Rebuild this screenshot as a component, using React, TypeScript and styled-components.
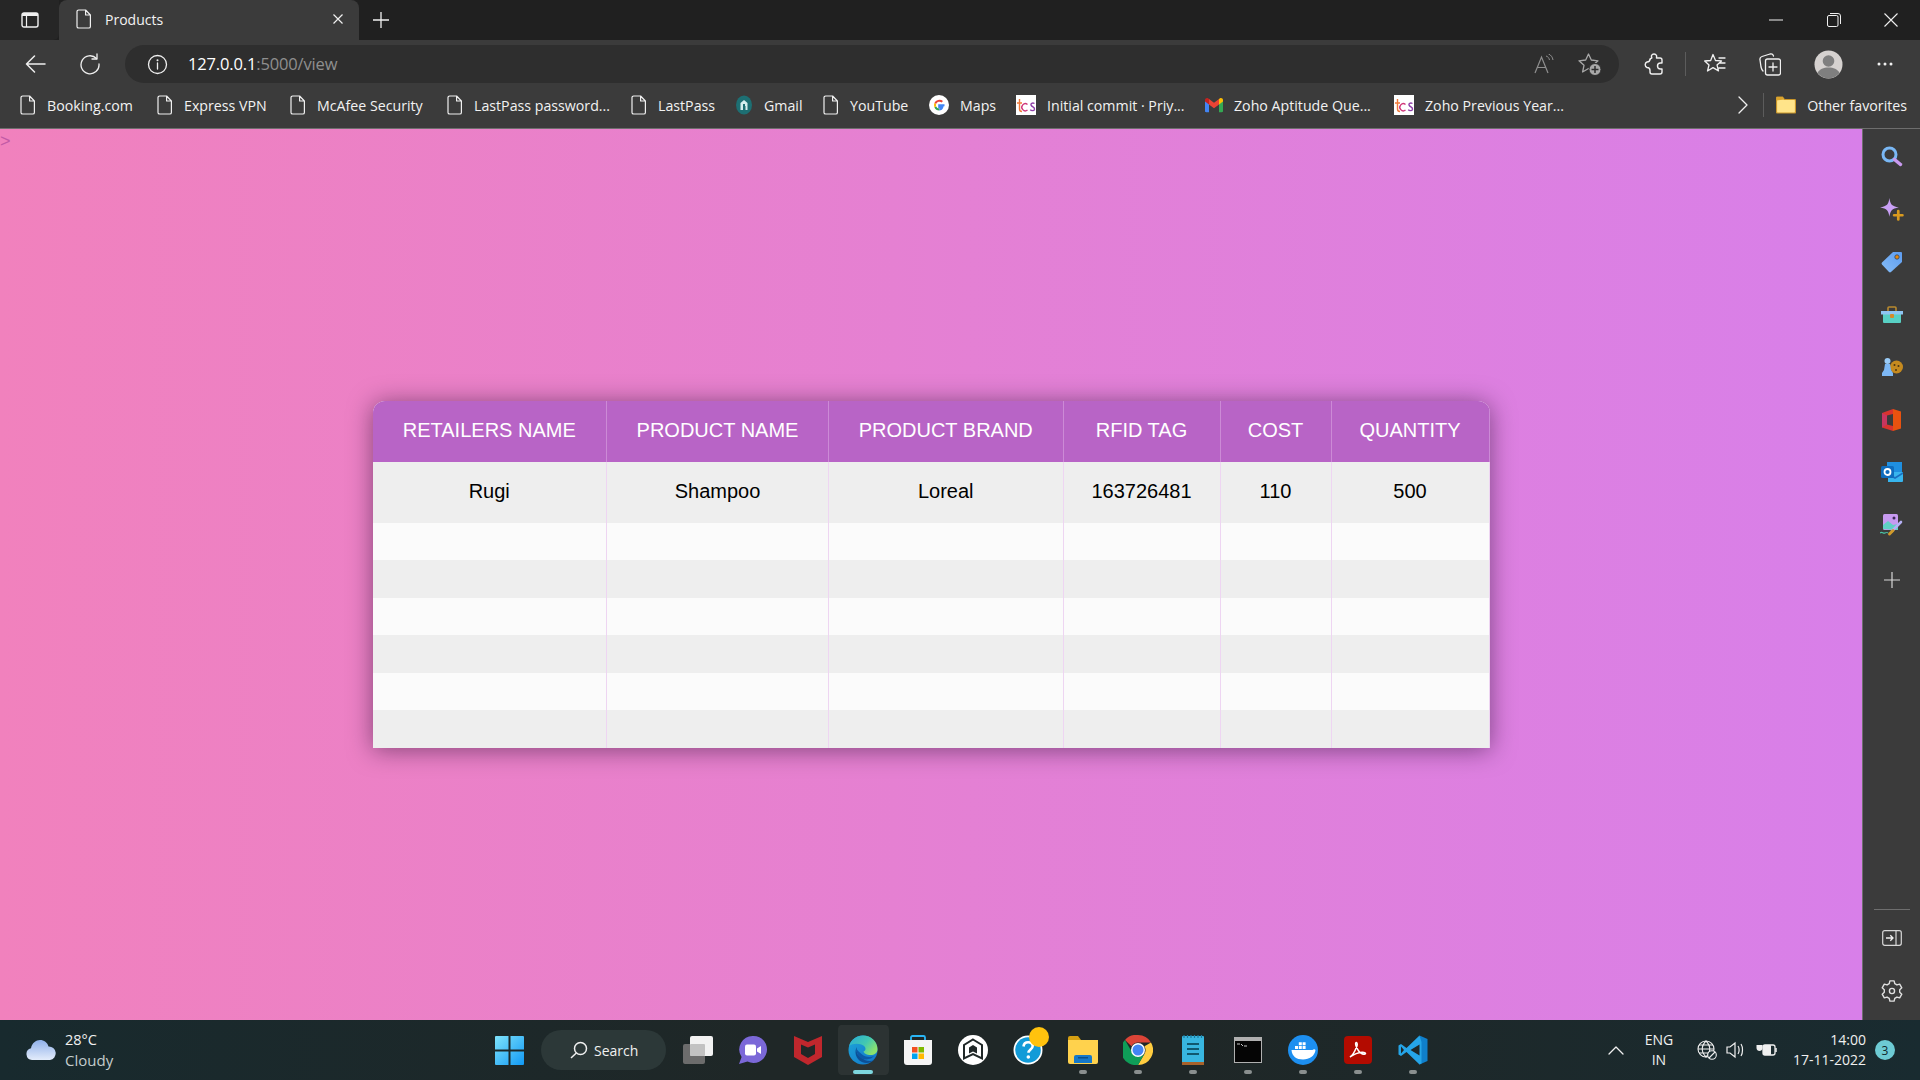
import React from "react";
import styled, { createGlobalStyle } from "styled-components";

const Global = createGlobalStyle`
  html, body { margin: 0; padding: 0; height: 100%; overflow: hidden; }
  body { font-family: "Open Sans", "Noto Sans", sans-serif; }
  #root { height: 100%; }
`;

const Screen = styled.div`
  width: 1920px;
  height: 1080px;
  display: flex;
  flex-direction: column;
  overflow: hidden;
`;

/* ---------- title bar ---------- */
const TitleBar = styled.div`
  height: 40px;
  flex: none;
  display: flex;
  align-items: stretch;
  background: #202020;
`;
const TabToggle = styled.div`
  width: 59px;
  display: flex;
  align-items: center;
  justify-content: center;
  background: #262626;
  border-bottom-right-radius: 6px;
`;
const Tab = styled.div`
  width: 300px;
  display: flex;
  align-items: center;
  padding: 0 15px 2px 17px;
  box-sizing: border-box;
  gap: 13px;
  background: #3b3b3b;
  border-radius: 8px 8px 0 0;
  color: #f2f2f2;
  font-size: 14px;
`;
const TabLabel = styled.span`
  flex: 1;
`;
const NewTab = styled.div`
  width: 44px;
  display: flex;
  align-items: center;
  justify-content: center;
`;
const Spacer = styled.div`
  flex: 1;
`;
const WindowBtn = styled.div`
  width: 57.5px;
  display: flex;
  align-items: center;
  justify-content: center;
`;

/* ---------- toolbar ---------- */
const ToolBar = styled.div`
  height: 48px;
  flex: none;
  box-sizing: border-box;
  padding: 5px 0 5px 7.5px;
  display: flex;
  align-items: stretch;
  background: #3b3b3b;
`;
const ToolBtn = styled.div<{ $w: number }>`
  width: ${(p) => p.$w}px;
  flex: none;
  display: flex;
  align-items: center;
  justify-content: center;
`;
const Address = styled.div`
  width: 1494px;
  flex: none;
  margin: 0 4px 0 7.5px;
  box-sizing: border-box;
  padding: 0 7px 0 22px;
  display: flex;
  align-items: center;
  background: #2e2e2e;
  border-radius: 19px;
`;
const Url = styled.div`
  margin-left: 20px;
  flex: 1;
  font-size: 16.5px;
  letter-spacing: -0.15px;
  color: #ffffff;
  padding-bottom: 1px;
`;
const UrlRest = styled.span`
  color: #8f8f8f;
`;
const ToolDivider = styled.div`
  width: 1px;
  height: 24px;
  align-self: center;
  background: #5c5c5c;
  flex: none;
`;

/* ---------- bookmarks ---------- */
const BookmarkBar = styled.div`
  height: 41px;
  flex: none;
  box-sizing: border-box;
  padding: 0 13px 6px 20px;
  display: flex;
  align-items: center;
  background: #3b3b3b;
  border-bottom: 1px solid #6e6e6e;
  color: #f2f2f2;
  font-size: 14.2px;
`;
const Bookmark = styled.div<{ $w?: number }>`
  width: ${(p) => (p.$w ? `${p.$w}px` : "auto")};
  flex: none;
  display: flex;
  align-items: center;
  gap: 11px;
  white-space: nowrap;
`;
const BookmarkIcon = styled.span`
  flex: none;
  display: flex;
  justify-content: center;
`;
const MoreChevron = styled.div`
  display: flex;
  margin-right: 15px;
`;
const BarDivider = styled.div`
  width: 1px;
  height: 24px;
  background: #5c5c5c;
  margin-right: 12px;
`;

/* ---------- content ---------- */
const Middle = styled.div`
  flex: 1;
  min-height: 0;
  display: flex;
`;
const Page = styled.main`
  flex: 1;
  position: relative;
  display: flex;
  align-items: center;
  justify-content: center;
  background: linear-gradient(to right, #f181bd, #d87fe9);
`;
const StrayMark = styled.span`
  position: absolute;
  left: 0;
  top: 2px;
  font: 18px "Liberation Sans", Arial, sans-serif;
  color: #c25aa6;
`;
const TableCard = styled.div`
  border-radius: 12px 12px 0 0;
  overflow: hidden;
  box-shadow: 0 2px 24px rgba(30, 10, 40, 0.5);
  background: #fff;
`;
const Table = styled.table`
  table-layout: fixed;
  width: 1117px;
  border-collapse: separate;
  border-spacing: 0;
  font: 20px "Liberation Sans", Arial, sans-serif;
  text-align: center;
`;
const HeadCell = styled.th<{ $w: number }>`
  width: ${(p) => p.$w}px;
  box-sizing: border-box;
  padding: 18px 0 20px;
  font-weight: 400;
  color: #ffffff;
  background: #b864c6;
  border-right: 1px solid #cc8ad6;
  white-space: nowrap;
`;
const Row = styled.tr<{ $odd: boolean }>`
  background: ${(p) => (p.$odd ? "#eeeeee" : "#fbfbfb")};
`;
const Cell = styled.td`
  padding: 18px 0 19.5px;
  height: 0;
  color: #000000;
  border-right: 1px solid #eed5f2;
  white-space: nowrap;
`;

/* ---------- sidebar ---------- */
const Sidebar = styled.aside`
  width: 58px;
  flex: none;
  box-sizing: border-box;
  padding: 2px 0 3px;
  display: flex;
  flex-direction: column;
  background: #3b3b3b;
  border-left: 1px solid #6e6e6e;
`;
const SideBtn = styled.div<{ $nudge?: number }>`
  height: 52.5px;
  flex: none;
  margin-top: ${(p) => p.$nudge || 0}px;
  display: flex;
  align-items: center;
  justify-content: center;
`;
const SideRule = styled.div`
  height: 1px;
  margin: auto 10px 2px 11px;
  background: #6e6e6e;
`;

/* ---------- taskbar ---------- */
const Taskbar = styled.footer`
  height: 60px;
  flex: none;
  display: flex;
  align-items: center;
  background: linear-gradient(to right, #182a2e, #1f2727 40%, #1f2727 62%, #192b30);
  color: #f0f0f0;
  font-size: 14px;
`;
const Weather = styled.div`
  width: 495px;
  flex: none;
  box-sizing: border-box;
  padding-left: 26px;
  display: flex;
  align-items: center;
  gap: 9px;
  font-size: 14.5px;
`;
const TwoLines = styled.div<{ $align?: string }>`
  display: flex;
  flex-direction: column;
  gap: 2px;
  line-height: 18px;
  text-align: ${(p) => p.$align || "left"};
`;
const Muted = styled.span`
  color: #c4cccc;
  font-size: 15px;
`;
const StartBtn = styled.div`
  width: 46px;
  flex: none;
  display: flex;
`;
const SearchPill = styled.div`
  width: 125px;
  height: 40px;
  flex: none;
  box-sizing: border-box;
  padding-left: 29px;
  display: flex;
  align-items: center;
  gap: 6px;
  border-radius: 20px;
  background: #2c3838;
  margin-right: 4.5px;
`;
const TaskBtn = styled.div<{ $active?: boolean }>`
  position: relative;
  width: 55px;
  height: 50px;
  flex: none;
  display: flex;
  align-items: center;
  justify-content: center;
  box-sizing: border-box;
  border-radius: 5px;
  background: ${(p) => (p.$active ? "#2c3333" : "transparent")};
  background-clip: padding-box;
  border-left: ${(p) => (p.$active ? "2.5px solid transparent" : "0")};
  border-right: ${(p) => (p.$active ? "2.5px solid transparent" : "0")};
`;
const RunDot = styled.span<{ $active?: boolean }>`
  position: absolute;
  bottom: 1px;
  left: 50%;
  transform: translateX(-50%);
  width: ${(p) => (p.$active ? "20px" : "8px")};
  height: 4px;
  border-radius: 2px;
  background: ${(p) => (p.$active ? "#7dd6de" : "#8a8f8f")};
`;
const HelpBadge = styled.span`
  position: absolute;
  top: 2px;
  right: 7px;
  width: 20px;
  height: 20px;
  border-radius: 50%;
  background: #ffc20e;
`;
const Tray = styled.div`
  flex: 1;
  display: flex;
  align-items: center;
  justify-content: flex-end;
  padding-right: 25px;
`;
const TrayIcon = styled.span<{ $w: number }>`
  width: ${(p) => p.$w}px;
  flex: none;
  display: flex;
  justify-content: center;
`;
const Lang = styled.div`
  width: 50px;
  flex: none;
  margin: 0 8px 0 6px;
`;
const Clock = styled.div`
  margin: 0 9px;
  flex: none;
`;
const Notif = styled.span`
  width: 20px;
  height: 20px;
  flex: none;
  border-radius: 50%;
  background: #6dcbd4;
  color: #10282c;
  font-size: 12px;
  display: flex;
  align-items: center;
  justify-content: center;
`;

/* ---------- drawings ---------- */
const Line = { fill: "none", stroke: "#f0f0f0", strokeWidth: 1.3, strokeLinecap: "round", strokeLinejoin: "round" } as const;

const FileIcon = ({ h = 20 }: { h?: number }) => (
  <svg width={h * 0.8} height={h} viewBox="0 0 16 20">
    <path {...Line} strokeWidth={1.2} d="M2.6 1h7l4.8 5v11.4a1.6 1.6 0 0 1-1.6 1.6H2.6A1.6 1.6 0 0 1 1 17.4V2.6A1.6 1.6 0 0 1 2.6 1zM9.6 1v5h4.800" />
  </svg>
);
const TcsIcon = () => (
  <svg width="20" height="20" viewBox="0 0 20 20">
    <rect width="20" height="20" fill="#fff" />
    <path d="M3.5 4v10c0 2 1 2.5 2.5 2.5M1 8h5" fill="none" stroke="#f0793a" strokeWidth="1.4" />
    <path d="M11.5 9.500a3.500 3.500 0 1 0 0 5.500" fill="none" stroke="#d0387a" strokeWidth="1.4" />
    <path d="M18.500 8.500c-2-1.200-4.300 0-3.300 1.800s4 2 3.300 4.200c-.6 1.700-3.500 1.300-4.200.200" fill="none" stroke="#8e3fa8" strokeWidth="1.4" />
  </svg>
);
const GoogleIcon = () => (
  <svg width="20" height="20" viewBox="0 0 20 20">
    <circle cx="10" cy="10" r="10" fill="#fff" />
    <path d="M15.500 10.200h-5.300v2h3.100c-.4 1.400-1.600 2.200-3.100 2.200" fill="none" stroke="#4285f4" strokeWidth="2" />
    <path d="M10.200 14.400c-1.700 0-3.200-1-3.900-2.600" fill="none" stroke="#34a853" strokeWidth="2" />
    <path d="M6.300 11.800c-.4-1-.4-2.400 0-3.500" fill="none" stroke="#fbbc05" strokeWidth="2" />
    <path d="M6.300 8.300c1-2.500 4.800-3.500 7-1.500" fill="none" stroke="#ea4335" strokeWidth="2" />
  </svg>
);
const GmailIcon = () => (
  <svg width="18" height="16" viewBox="0 0 18 16">
    <path d="M0 3v11c0 .8.500 1.200 1.200 1.200H4V6.500z" fill="#4285f4" />
    <path d="M18 3v11c0 .8-.5 1.200-1.200 1.200H14V6.500z" fill="#34a853" />
    <path d="M4 7.500V2l5 3.800L14 2v5.500L9 11.300z" fill="#ea4335" />
    <path d="M0 3c0-2 2-2.500 3-1.800L4 2v5.500L0 4.500z" fill="#c5221f" />
    <path d="M18 3c0-2-2-2.500-3-1.800L14 2v5.500l4-3z" fill="#fbbc04" />
  </svg>
);
const GmailSite = () => (
  <svg width="18" height="20" viewBox="0 0 18 20">
    <ellipse cx="9" cy="10" rx="8" ry="9.500" fill="#1d6f73" />
    <path d="M5.500 15V8l3.500-3 3.500 3v7h-2v-4H8v4z" fill="#d5eeee" />
    <path d="M8 15V9h2v6z" fill="#1d6f73" />
  </svg>
);
const FolderIcon = () => (
  <svg width="20" height="18" viewBox="0 0 20 18">
    <path d="M1.500 1h5l2 2.500h10a1 1 0 0 1 1 1V16a1 1 0 0 1-1 1h-17a1 1 0 0 1-1-1V2a1 1 0 0 1 1-1z" fill="#ffe48a" stroke="#c9962a" strokeWidth="1.200" />
    <path d="M.5 4.500V2a1 1 0 0 1 1-1h5l2 2.500z" fill="#dba42d" />
  </svg>
);

const SideSearch = () => (
  <svg width="22" height="22" viewBox="0 0 22 22">
    <circle cx="8.500" cy="8.500" r="6.500" fill="none" stroke="#7ab8f5" strokeWidth="3" />
    <path d="M13.500 13.500l6 5" stroke="#c99af0" strokeWidth="3.500" strokeLinecap="round" />
  </svg>
);
const SideSparkle = () => (
  <svg width="25" height="25" viewBox="0 0 24 24">
    <path d="M10 1c.9 6 2.200 8 9 9-6.800 1.200-8.100 3-9 9-.9-6-2.200-7.800-9-9 6.800-1 8.100-3 9-9z" fill="#c9a0f5" />
    <path d="M18.500 13.500v8M14.500 17.500h8" stroke="#d99a1f" strokeWidth="2.600" strokeLinecap="round" />
  </svg>
);
const SideTag = () => (
  <svg width="22" height="22" viewBox="0 0 22 22">
    <defs>
      <linearGradient id="tagG" x1="0" y1="1" x2="1" y2="0">
        <stop offset="0" stopColor="#86bdf7" />
        <stop offset="1" stopColor="#5d9cf0" />
      </linearGradient>
    </defs>
    <path d="M12 1h8a1 1 0 0 1 1 1v9L10 21a1.500 1.500 0 0 1-2 0L1 13.500a1.500 1.500 0 0 1 0-2z" fill="url(#tagG)" />
    <circle cx="16" cy="6" r="2.200" fill="#e8860c" stroke="#26456b" strokeWidth=".8" />
  </svg>
);
const SideTools = () => (
  <svg width="22" height="18" viewBox="0 0 22 18">
    <path d="M7 5V2a1 1 0 0 1 1-1h6a1 1 0 0 1 1 1v3" fill="none" stroke="#b98a2f" strokeWidth="1.600" />
    <rect x="2" y="7" width="18" height="10" rx="1" fill="#58d0c4" />
    <path d="M0 5h22v3.500H0z" fill="#8fc5f2" />
    <rect x="9" y="8" width="4" height="4" rx="1" fill="#d88a2a" />
  </svg>
);
const SideGames = () => (
  <svg width="24" height="22" viewBox="0 0 24 22">
    <circle cx="16.500" cy="11" r="6.500" fill="#c58a1f" />
    <circle cx="14.500" cy="9" r="1" fill="#4a3412" />
    <circle cx="18.500" cy="10" r="1" fill="#4a3412" />
    <circle cx="16" cy="14" r="1" fill="#4a3412" />
    <circle cx="7.500" cy="5" r="3" fill="#9accf8" />
    <path d="M5 8h5l1 6 2 3v3H2v-3l2-3z" fill="#7db8f5" />
  </svg>
);
const SideOffice = () => (
  <svg width="22" height="26" viewBox="0 0 22 24">
    <path d="M1 5l11-4v22L1 19.500z" fill="#d8332f" />
    <path d="M12 1l8 2.500v17L12 23z" fill="#e8520f" />
    <path d="M6 7.500l6-1.500v12l-6-1.500z" fill="#3b3b3b" />
    <path d="M1 5l5 2.500v9L1 19.500z" fill="#c8355f" />
  </svg>
);
const SideOutlook = () => (
  <svg width="22" height="22" viewBox="0 0 22 22">
    <rect x="6" y="1" width="15" height="12" fill="#1f8fe0" />
    <path d="M7 11h15v9a1 1 0 0 1-1 1H7z" fill="#37b5ee" />
    <path d="M7 12l7 4 8-5v2l-8 5-7-4z" fill="#1a6fc0" />
    <rect x="0" y="5" width="13" height="12" rx="1.500" fill="#0f6cbd" />
    <circle cx="6.500" cy="11" r="3" fill="none" stroke="#fff" strokeWidth="1.800" />
  </svg>
);
const SideDesigner = () => (
  <svg width="24" height="24" viewBox="0 0 24 24">
    <rect x="3" y="1" width="15" height="16" rx="1.500" fill="#c79af0" />
    <path d="M3 16V12l5-4 5 4 5-1v6z" fill="#5fd0c4" />
    <circle cx="14" cy="5" r="1.500" fill="#3b2a55" />
    <path d="M12 18l9-9" stroke="#b6b0f5" strokeWidth="2.600" strokeLinecap="round" />
    <path d="M9.500 21l3.500-3.500" stroke="#d09a2a" strokeWidth="3" strokeLinecap="round" />
    <path d="M0 20c2-2 3 1 5 0s2-1 3 0" fill="none" stroke="#49c7a8" strokeWidth="1.200" />
  </svg>
);
const SidePanel = () => (
  <svg width="20" height="16" viewBox="0 0 20 16">
    <rect x=".7" y=".7" width="18.600" height="14.600" rx="2" fill="none" stroke="#d8d8d8" strokeWidth="1.200" />
    <path d="M14 1v14" stroke="#d8d8d8" strokeWidth="1.200" />
    <path d="M4 8h7M8.300 5.300L11 8l-2.700 2.700" fill="none" stroke="#f0f0f0" strokeWidth="1.300" />
  </svg>
);
const SideGear = () => (
  <svg width="22" height="22" viewBox="0 0 24 24" fill="none" stroke="#e0e0e0" strokeWidth="1.500" strokeLinejoin="round">
    <path d="M9.700 2h4.600l.7 3 2.400 1.400 3-.9 2.300 4-2.300 2.100v2.800l2.300 2.100-2.300 4-3-.9L15 21l-.7 3H9.700L9 21l-2.400-1.400-3 .9-2.300-4 2.300-2.100v-2.800L1.300 9.500l2.300-4 3 .9L9 5z" transform="translate(0 -1)" />
    <circle cx="12" cy="12" r="2.800" />
  </svg>
);

const TaskView = () => (
  <svg width="30" height="28" viewBox="0 0 30 28">
    <rect x="0" y="8" width="22" height="20" rx="2" fill="#6c6c6c" />
    <rect x="7" y="0" width="23" height="20" rx="2" fill="#f2f2f2" />
    <rect x="7" y="8" width="15" height="12" rx="1" fill="#c2c2c2" />
  </svg>
);
const Teams = () => (
  <svg width="30" height="30" viewBox="0 0 30 30">
    <path d="M15.500 1a13.500 13.500 0 1 1-6 25.600L1 29l2.600-7A13.500 13.500 0 0 1 15.500 1z" fill="#7b68d8" />
    <rect x="7" y="9.500" width="11" height="11" rx="2" fill="#fff" />
    <path d="M19 13.500l4-2.500v8l-4-2.500z" fill="#fff" />
  </svg>
);
const McAfee = () => (
  <svg width="28" height="30" viewBox="0 0 28 30">
    <path d="M0 1l14 6 14-6v21l-14 8-14-8z" fill="#c0272d" />
    <path d="M7 9.500l7 3 7-3v9.500l-7 4-7-4z" fill="#1f2727" />
  </svg>
);
const Edge = () => (
  <svg width="30" height="30" viewBox="0 0 30 30">
    <defs>
      <linearGradient id="edgeA" x1="0" y1="0" x2="1" y2="1">
        <stop offset="0" stopColor="#1ea7d9" />
        <stop offset="1" stopColor="#1173c9" />
      </linearGradient>
      <linearGradient id="edgeB" x1="0" y1="0" x2="1" y2=".6">
        <stop offset="0" stopColor="#27a9d8" />
        <stop offset=".6" stopColor="#43c8b0" />
        <stop offset="1" stopColor="#8ce36d" />
      </linearGradient>
    </defs>
    <circle cx="15" cy="15" r="14.500" fill="url(#edgeA)" />
    <path d="M1 11C3 4.500 9 .5 15 .5c8 0 14.500 6 14.500 13.500 0 4-3 6-7 6-3.500 0-6.500-1.500-7-3.500 2-1 2.500-2.500 1.500-4.500C14 8.500 6 7.500 1 11z" fill="url(#edgeB)" />
    <path d="M9 12c-3 4-1.500 12 5 15 4 2 9 1 12-2-4 2-9 1-12-2-3-3-6.500-3-5-11z" fill="#0d4f95" />
    <path d="M8.500 14c0 7 5 11 10 10.500 3.500-.3 6-1.500 7.500-3.500-4 2-9.500 1-12.500-2-2.500-2-4-4-5-5z" fill="#0b5aa8" />
  </svg>
);
const Store = () => (
  <svg width="30" height="30" viewBox="0 0 30 30">
    <path d="M8 6V2.500a1.500 1.500 0 0 1 1.500-1.500h11A1.500 1.500 0 0 1 22 2.500V6" fill="none" stroke="#29b6f6" strokeWidth="1.800" />
    <path d="M1 5h28v22a3 3 0 0 1-3 3H4a3 3 0 0 1-3-3z" fill="#f5f5f5" />
    <rect x="9" y="12" width="5.500" height="5.500" fill="#f25022" />
    <rect x="15.500" y="12" width="5.500" height="5.500" fill="#7fba00" />
    <rect x="9" y="18.500" width="5.500" height="5.500" fill="#00a4ef" />
    <rect x="15.500" y="18.500" width="5.500" height="5.500" fill="#ffb900" />
  </svg>
);
const ArcHex = () => (
  <svg width="30" height="30" viewBox="0 0 30 30">
    <circle cx="15" cy="15" r="15" fill="#fff" />
    <path d="M15 4.500L24 10v13.500l-9-4.500-9 4.500V10z" fill="none" stroke="#1f2727" strokeWidth="2" />
    <path d="M15 10l4 2.500v6L15 16.500l-4 2v-6z" fill="#1f2727" />
  </svg>
);
const Help = () => (
  <svg width="30" height="30" viewBox="0 0 30 30">
    <circle cx="15" cy="15" r="14.500" fill="#fff" />
    <circle cx="15" cy="15" r="12.800" fill="#129bd8" />
    <path d="M10.500 11.500c.3-3 2.300-4.300 4.700-4.300 2.800 0 4.500 1.600 4.500 3.800 0 3.500-4.200 3.500-4.200 6.800" fill="none" stroke="#fff" strokeWidth="2.600" />
    <circle cx="15.300" cy="22" r="1.800" fill="#fff" />
  </svg>
);
const Explorer = () => (
  <svg width="30" height="28" viewBox="0 0 30 28">
    <path d="M0 2a2 2 0 0 1 2-2h8l3 4h-13z" fill="#d59f12" />
    <path d="M0 4h30v22a2 2 0 0 1-2 2H2a2 2 0 0 1-2-2z" fill="#ffd24d" />
    <path d="M6 27v-6a2 2 0 0 1 2-2h14a2 2 0 0 1 2 2v6z" fill="#1578c9" />
    <rect x="10" y="21" width="10" height="1.500" fill="#0a4f8c" />
  </svg>
);
const Chrome = () => (
  <svg width="30" height="30" viewBox="0 0 30 30">
    <path d="M15 0a15 15 0 0 1 13 7.500H15a7.500 7.500 0 0 0-6.500 3.750L2 4.900A15 15 0 0 1 15 0z" fill="#db4437" />
    <path d="M28 7.500A15 15 0 0 1 15 30l6.500-11.250A7.500 7.500 0 0 0 21.500 11.250z" fill="#ffcd40" />
    <path d="M2 4.900l6.500 11.350A7.500 7.500 0 0 0 21.500 18.750L15 30A15 15 0 0 1 2 4.900z" fill="#0f9d58" />
    <circle cx="15" cy="15" r="7" fill="#fff" />
    <circle cx="15" cy="15" r="5.500" fill="#4285f4" />
  </svg>
);
const Notepad = () => (
  <svg width="24" height="30" viewBox="0 0 24 30">
    <rect x="1" y="1" width="22" height="28" rx="1" fill="#38b6e0" />
    <rect x="1" y="27" width="22" height="3" fill="#a8622b" />
    <path d="M3 0v3M6.500 0v3M10 0v3M13.500 0v3M17 0v3M20.500 0v3" stroke="#1b7ba0" strokeWidth="1.200" />
    <path d="M6 9h12M6 14h12M6 19h12" stroke="#10586f" strokeWidth="2" />
  </svg>
);
const Terminal = () => (
  <svg width="28" height="26" viewBox="0 0 28 26">
    <rect width="28" height="26" fill="#b0b0b0" />
    <rect x="1" y="4" width="26" height="21" fill="#050505" />
    <path d="M3 7h3M7 7l2 2M10 9h3" stroke="#c8c8c8" strokeWidth="1" />
  </svg>
);
const Docker = () => (
  <svg width="30" height="30" viewBox="0 0 30 30">
    <circle cx="15" cy="15" r="15" fill="#1d8ff0" />
    <path d="M3.500 15h21c1-1 2.500-1 3 0-.8 6-6 9.500-12.500 9.500S4 21.500 3.500 15z" fill="#fff" />
    <path d="M7 11h3v3H7zM10.800 11h3v3h-3zM14.600 11h3v3h-3zM10.800 7.300h3v3h-3zM14.600 7.300h3v3h-3z" fill="#fff" />
  </svg>
);
const Acrobat = () => (
  <svg width="28" height="28" viewBox="0 0 28 28">
    <rect width="28" height="28" rx="4" fill="#b30b00" />
    <path d="M6 21c2-1 5-6 7-11 .7-2-.3-4-1-3.500-.8.700 0 4 2 7.500 2 3 5 4.500 7 4 1.500-.5-.5-2-3-1.800-3 .2-8 2-12 4.800z" fill="none" stroke="#fff" strokeWidth="1.500" />
  </svg>
);
const VSCode = () => (
  <svg width="30" height="30" viewBox="0 0 30 30">
    <path d="M21.500 0.500L29.500 4v22l-8 3.500z" fill="#0f7fcb" />
    <path d="M21.500 .5L8.500 13l-5.500-4L.5 10.500v9L3 21l5.500-4 13 12.500 2-.9V7z" fill="#25a5e8" />
    <path d="M21.500 9.500L12.500 15l9 5.500z" fill="#1f2727" />
    <path d="M3 11.500L6 15l-3 3.500z" fill="#1f2727" />
  </svg>
);

const headers: { label: string; w: number }[] = [
  { label: "RETAILERS NAME", w: 234.5 },
  { label: "PRODUCT NAME", w: 222 },
  { label: "PRODUCT BRAND", w: 234.5 },
  { label: "RFID TAG", w: 157 },
  { label: "COST", w: 111 },
  { label: "QUANTITY", w: 158 },
];
const rows = [
  ["Rugi", "Shampoo", "Loreal", "163726481", "110", "500"],
  ["", "", "", "", "", ""],
  ["", "", "", "", "", ""],
  ["", "", "", "", "", ""],
  ["", "", "", "", "", ""],
  ["", "", "", "", "", ""],
  ["", "", "", "", "", ""],
];

const bookmarks: { label: string; w: number; icon: React.ReactNode }[] = [
  { label: "Booking.com", w: 137, icon: <FileIcon /> },
  { label: "Express VPN", w: 133, icon: <FileIcon /> },
  { label: "McAfee Security", w: 157, icon: <FileIcon /> },
  { label: "LastPass password...", w: 184, icon: <FileIcon /> },
  { label: "LastPass", w: 104, icon: <FileIcon /> },
  { label: "Gmail", w: 88, icon: <GmailSite /> },
  { label: "YouTube", w: 106, icon: <FileIcon /> },
  { label: "Maps", w: 87, icon: <GoogleIcon /> },
  { label: "Initial commit · Priy...", w: 189, icon: <TcsIcon /> },
  { label: "Zoho Aptitude Que...", w: 189, icon: <GmailIcon /> },
  { label: "Zoho Previous Year...", w: 0, icon: <TcsIcon /> },
];

const sideIcons = [
  <SideSearch />, <SideSparkle />, <SideTag />, <SideTools />, <SideGames />, <SideOffice />, <SideOutlook />, <SideDesigner />,
];

const taskIcons: { icon: React.ReactNode; dot?: boolean; active?: boolean; badge?: boolean }[] = [
  { icon: <TaskView /> },
  { icon: <Teams /> },
  { icon: <McAfee /> },
  { icon: <Edge />, dot: true, active: true },
  { icon: <Store /> },
  { icon: <ArcHex /> },
  { icon: <Help />, badge: true },
  { icon: <Explorer />, dot: true },
  { icon: <Chrome />, dot: true },
  { icon: <Notepad />, dot: true },
  { icon: <Terminal />, dot: true },
  { icon: <Docker />, dot: true },
  { icon: <Acrobat />, dot: true },
  { icon: <VSCode />, dot: true },
];

export default function App() {
  return (
    <Screen>
      <Global />
      <TitleBar>
        <TabToggle>
          <svg width="18" height="16" viewBox="0 0 18 16">
            <rect x="1" y="1" width="16" height="14" rx="2" fill="none" stroke="#f0f0f0" strokeWidth="1.400" />
            <path d="M1 3a2 2 0 0 1 2-2h12a2 2 0 0 1 2 2v1H1z" fill="#f0f0f0" />
            <path d="M5.500 4v11" stroke="#f0f0f0" strokeWidth="1.200" />
          </svg>
        </TabToggle>
        <Tab>
          <FileIcon />
          <TabLabel>Products</TabLabel>
          <svg width="12" height="12" viewBox="0 0 12 12">
            <path d="M1.500 1.500l9 9M10.500 1.500l-9 9" stroke="#f0f0f0" strokeWidth="1.200" />
          </svg>
        </Tab>
        <NewTab>
          <svg width="18" height="18" viewBox="0 0 18 18">
            <path d="M9 1v16M1 9h16" stroke="#f0f0f0" strokeWidth="1.300" />
          </svg>
        </NewTab>
        <Spacer />
        <WindowBtn>
          <svg width="14" height="2" viewBox="0 0 14 2"><path d="M0 1h14" stroke="#f0f0f0" /></svg>
        </WindowBtn>
        <WindowBtn>
          <svg width="14" height="14" viewBox="0 0 14 14">
            <rect x=".5" y="2.500" width="10.500" height="11" rx="1.500" fill="none" stroke="#f0f0f0" />
            <path d="M3 .5h8a2.500 2.500 0 0 1 2.500 2.500v8" fill="none" stroke="#f0f0f0" />
          </svg>
        </WindowBtn>
        <WindowBtn>
          <svg width="14" height="14" viewBox="0 0 14 14">
            <path d="M.5.5l13 13M13.500.5l-13 13" stroke="#f0f0f0" strokeWidth="1.100" />
          </svg>
        </WindowBtn>
      </TitleBar>

      <ToolBar>
        <ToolBtn $w={55}>
          <svg width="21" height="18" viewBox="0 0 21 18">
            <path d="M20 9H1.500M9.500 1L1.500 9l8 8" {...Line} strokeWidth={1.500} />
          </svg>
        </ToolBtn>
        <ToolBtn $w={55}>
          <svg width="22" height="22" viewBox="0 0 22 22">
            <path d="M17.500 5.500A9 9 0 1 0 20 11" {...Line} />
            <path d="M13 6h5V1" {...Line} />
          </svg>
        </ToolBtn>
        <Address>
          <svg width="21" height="21" viewBox="0 0 21 21">
            <circle cx="10.500" cy="10.500" r="9" {...Line} />
            <path d="M10.500 9v6" {...Line} />
            <circle cx="10.500" cy="6.300" r="1" fill="#f0f0f0" />
          </svg>
          <Url>
            127.0.0.1<UrlRest>:5000/view</UrlRest>
          </Url>
          <ToolBtn $w={45}>
            <svg width="22" height="20" viewBox="0 0 22 20" fill="none" stroke="#8f8f8f" strokeWidth="1.200">
              <path d="M1 19L7.500 3 14 19M3.500 13.500h8" />
              <path d="M12 2c2 .5 3 2 3.500 4M14.500 0c2.500 1 4 3 4.500 6" strokeWidth="1" />
            </svg>
          </ToolBtn>
          <ToolBtn $w={45}>
            <svg width="24" height="24" viewBox="0 0 24 24">
              <path d="M10.500 2l2.800 6 6.700.8-5 4.500 1.400 6.600-5.900-3.400L4.600 20 6 13.300l-5-4.500 6.700-.8z" fill="none" stroke="#a8a8a8" strokeWidth="1.300" strokeLinejoin="round" />
              <circle cx="17" cy="17.500" r="6" fill="#a8a8a8" stroke="#2e2e2e" strokeWidth="1" />
              <path d="M17 14v7M13.500 17.500h7" stroke="#2e2e2e" strokeWidth="1.500" />
            </svg>
          </ToolBtn>
        </Address>
        <ToolBtn $w={62}>
          <svg width="20" height="24" viewBox="0 0 20 24">
            <path d="M7.500 3.500a2.800 2.800 0 0 1 5 0c.3 1 0 1.800 0 2.500h3.500a2 2 0 0 1 2 2v3h-1.500a3 3 0 0 0 0 6H18v3a2 2 0 0 1-2 2H8a2 2 0 0 1-2-2v-1.500a3 3 0 0 0-3-3 3 3 0 0 1 0-5.500 3 3 0 0 0 3-3V8a2 2 0 0 1 1.800-2c0-.7-.6-1.500-.3-2.500z" fill="none" stroke="#f0f0f0" strokeWidth="1.400" strokeLinejoin="round" />
          </svg>
        </ToolBtn>
        <ToolDivider />
        <ToolBtn $w={58}>
          <svg width="22" height="22" viewBox="0 0 22 22">
            <path d="M9 1.500l2.500 6 6 .4-4.500 4 1.500 6L9 14.600 3.500 18 5 12 .7 8l6-.5zM15 5h6M16 10h5M15 15h6" {...Line} />
          </svg>
        </ToolBtn>
        <ToolBtn $w={52}>
          <svg width="22" height="24" viewBox="0 0 22 24">
            <rect x="6.500" y="7" width="15" height="16" rx="2" {...Line} />
            <path d="M14 11v8M10 15h8" {...Line} />
            <path d="M4 19c-1-1-1.500-2-2-4L1 8c-.3-1.500.3-3 2-3.500L11 2c1.500-.4 3 0 3.500 2" {...Line} />
          </svg>
        </ToolBtn>
        <ToolBtn $w={64}>
          <svg width="29" height="29" viewBox="0 0 29 29">
            <circle cx="14.500" cy="14.500" r="14" fill="#d6d2d0" />
            <circle cx="14.500" cy="11" r="5.800" fill="#7f7f7f" />
            <path d="M3.500 23c2-4 6-5.500 11-5.500S23.500 19 25.500 23a14 14 0 0 1-22 0z" fill="#7f7f7f" />
          </svg>
        </ToolBtn>
        <ToolBtn $w={50}>
          <svg width="16" height="4" viewBox="0 0 16 4">
            <circle cx="2" cy="2" r="1.500" fill="#f0f0f0" />
            <circle cx="8" cy="2" r="1.500" fill="#f0f0f0" />
            <circle cx="14" cy="2" r="1.500" fill="#f0f0f0" />
          </svg>
        </ToolBtn>
      </ToolBar>

      <BookmarkBar>
        {bookmarks.map((b) => (
          <Bookmark key={b.label} $w={b.w || undefined}>
            <BookmarkIcon>{b.icon}</BookmarkIcon>
            <span>{b.label}</span>
          </Bookmark>
        ))}
        <Spacer />
        <MoreChevron>
          <svg width="10" height="18" viewBox="0 0 10 18">
            <path d="M1 1l8 8-8 8" {...Line} />
          </svg>
        </MoreChevron>
        <BarDivider />
        <Bookmark>
          <BookmarkIcon><FolderIcon /></BookmarkIcon>
          <span>Other favorites</span>
        </Bookmark>
      </BookmarkBar>

      <Middle>
        <Page>
          <StrayMark>&gt;</StrayMark>
          <TableCard>
            <Table>
              <thead>
                <tr>
                  {headers.map((h) => (
                    <HeadCell key={h.label} $w={h.w}>{h.label}</HeadCell>
                  ))}
                </tr>
              </thead>
              <tbody>
                {rows.map((r, i) => (
                  <Row key={i} $odd={i % 2 === 0}>
                    {r.map((c, j) => (
                      <Cell key={j}>{c}</Cell>
                    ))}
                  </Row>
                ))}
              </tbody>
            </Table>
          </TableCard>
        </Page>
        <Sidebar>
          {sideIcons.map((icon, i) => (
            <SideBtn key={i}>{icon}</SideBtn>
          ))}
          <SideBtn $nudge={3}>
            <svg width="16" height="16" viewBox="0 0 16 16">
              <path d="M8 0v16M0 8h16" stroke="#d8d8d8" strokeWidth="1.200" />
            </svg>
          </SideBtn>
          <SideRule />
          <SideBtn><SidePanel /></SideBtn>
          <SideBtn><SideGear /></SideBtn>
        </Sidebar>
      </Middle>

      <Taskbar>
        <Weather>
          <svg width="30" height="20" viewBox="0 0 30 20">
            <defs>
              <linearGradient id="cloudG" x1="0" y1="0" x2="0" y2="1">
                <stop offset="0" stopColor="#8fb0ea" />
                <stop offset="1" stopColor="#e3ecfb" />
              </linearGradient>
            </defs>
            <path d="M6 20a6 6 0 0 1-1-11.800C6 3 10 0 14 0c4 0 7.500 2.500 8.500 6.500A6.800 6.800 0 0 1 24 20z" fill="url(#cloudG)" />
          </svg>
          <TwoLines>
            <span>28°C</span>
            <Muted>Cloudy</Muted>
          </TwoLines>
        </Weather>
        <StartBtn>
          <svg width="29" height="29" viewBox="0 0 29 29">
            <defs>
              <linearGradient id="winG" x1="0" y1="0" x2="1" y2="1">
                <stop offset="0" stopColor="#7fe3fb" />
                <stop offset="1" stopColor="#1199f5" />
              </linearGradient>
            </defs>
            <path d="M0 1a1 1 0 0 1 1-1h12.500v13.500H0zM15.500 0H28a1 1 0 0 1 1 1v12.500H15.500zM0 15.500h13.500V29H1a1 1 0 0 1-1-1zM15.500 15.500H29V28a1 1 0 0 1-1 1H15.500z" fill="url(#winG)" />
          </svg>
        </StartBtn>
        <SearchPill>
          <svg width="18" height="18" viewBox="0 0 18 18">
            <circle cx="10.500" cy="7.500" r="6" fill="none" stroke="#f0f0f0" strokeWidth="1.500" />
            <path d="M6.300 12L1 17" stroke="#f0f0f0" strokeWidth="1.500" />
          </svg>
          <span>Search</span>
        </SearchPill>
        {taskIcons.map((t, i) => (
          <TaskBtn key={i} $active={t.active}>
            {t.icon}
            {t.badge && <HelpBadge />}
            {t.dot && <RunDot $active={t.active} />}
          </TaskBtn>
        ))}
        <Tray>
          <TrayIcon $w={24}>
            <svg width="16" height="9" viewBox="0 0 16 9"><path d="M1 8l7-7 7 7" {...Line} /></svg>
          </TrayIcon>
          <Lang>
            <TwoLines $align="center">
              <span>ENG</span>
              <span>IN</span>
            </TwoLines>
          </Lang>
          <TrayIcon $w={30}>
            <svg width="20" height="20" viewBox="0 0 20 20" fill="none" stroke="#f0f0f0" strokeWidth="1.100">
              <circle cx="9" cy="9" r="8" />
              <path d="M1 9h16M9 1c-5 5-5 11 0 16M9 1c5 5 5 11 0 16M2 5h14M2 13h9" />
              <circle cx="15" cy="15" r="4.300" fill="#192b30" />
              <path d="M12 18l6-6" />
            </svg>
          </TrayIcon>
          <TrayIcon $w={28}>
            <svg width="20" height="18" viewBox="0 0 20 18" fill="none" stroke="#f0f0f0" strokeWidth="1.200">
              <path d="M1 6v6h3l5 4V2L4 6z" />
              <path d="M12 5c1.500 2 1.500 6 0 8M15 3c2 3 2 9 0 12" />
            </svg>
          </TrayIcon>
          <TrayIcon $w={34}>
            <svg width="22" height="18" viewBox="0 0 22 18">
              <path d="M2 1v3M5 1v3M.5 4h6v3c0 2-1.500 3-3 3S.5 9 .5 7z" fill="#f0f0f0" />
              <rect x="7" y="4" width="12" height="10" rx="2" fill="none" stroke="#f0f0f0" strokeWidth="1.300" />
              <rect x="7" y="4" width="8" height="10" rx="1" fill="#f0f0f0" />
              <path d="M20 7v4" stroke="#f0f0f0" strokeWidth="1.500" />
            </svg>
          </TrayIcon>
          <Clock>
            <TwoLines $align="right">
              <span>14:00</span>
              <span>17-11-2022</span>
            </TwoLines>
          </Clock>
          <Notif>3</Notif>
        </Tray>
      </Taskbar>
    </Screen>
  );
}
